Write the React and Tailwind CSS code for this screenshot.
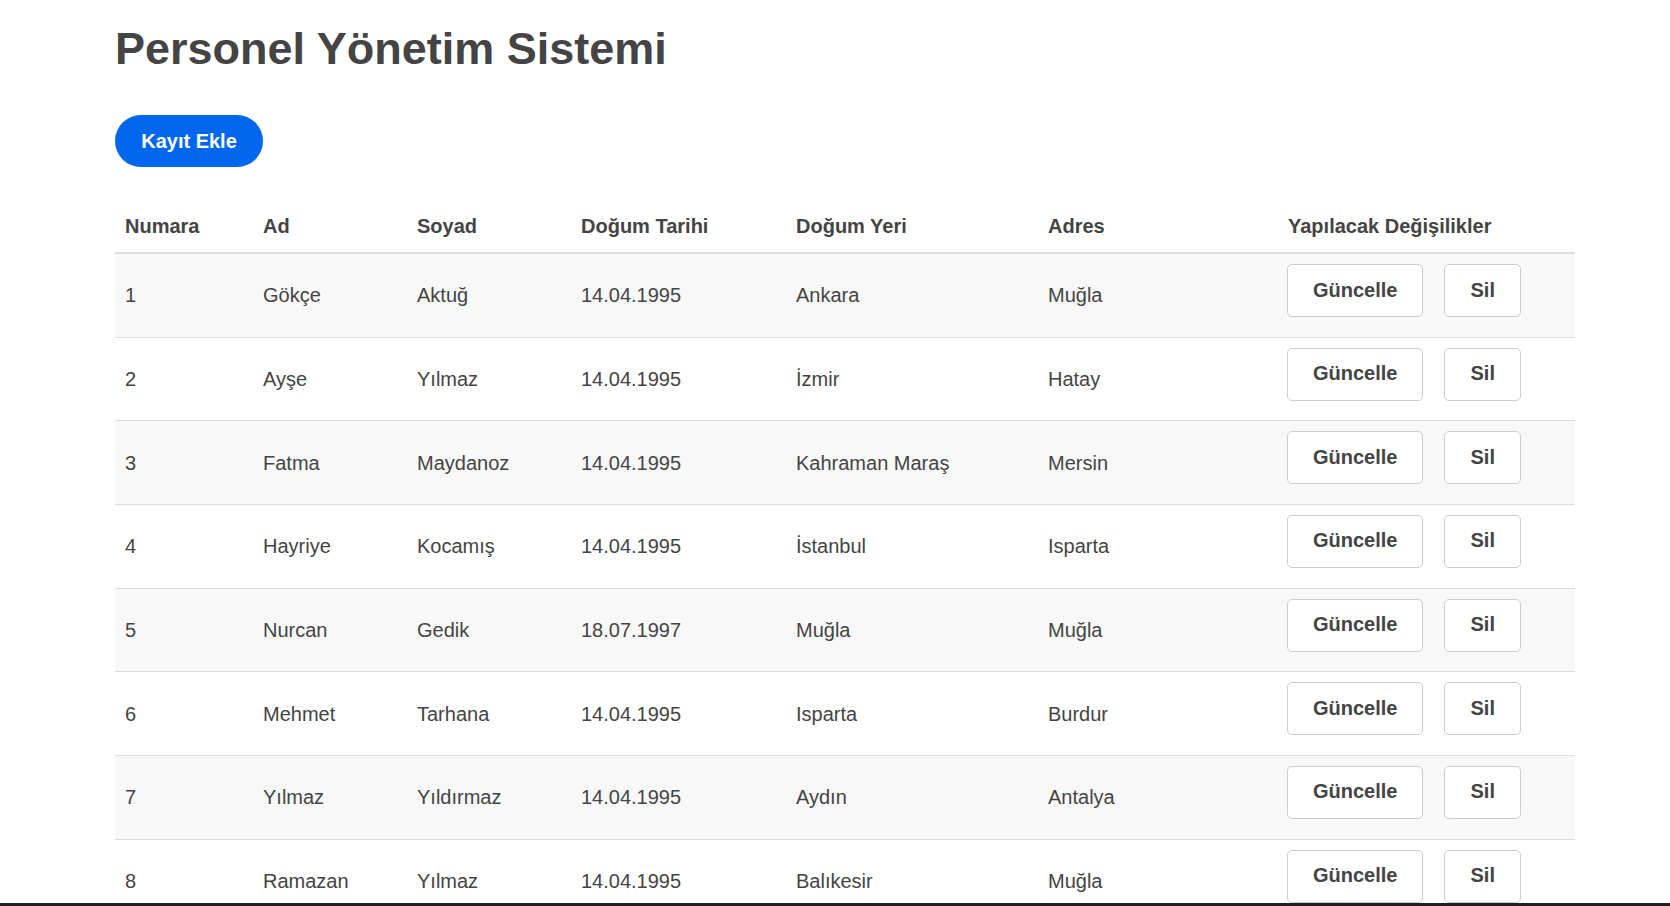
import React from 'react';

const personel = [
    {no: 1, ad: 'Gökçe', soyad: 'Aktuğ', tarih: '14.04.1995', yer: 'Ankara', adres: 'Muğla'},
    {no: 2, ad: 'Ayşe', soyad: 'Yılmaz', tarih: '14.04.1995', yer: 'İzmir', adres: 'Hatay'},
    {no: 3, ad: 'Fatma', soyad: 'Maydanoz', tarih: '14.04.1995', yer: 'Kahraman Maraş', adres: 'Mersin'},
    {no: 4, ad: 'Hayriye', soyad: 'Kocamış', tarih: '14.04.1995', yer: 'İstanbul', adres: 'Isparta'},
    {no: 5, ad: 'Nurcan', soyad: 'Gedik', tarih: '18.07.1997', yer: 'Muğla', adres: 'Muğla'},
    {no: 6, ad: 'Mehmet', soyad: 'Tarhana', tarih: '14.04.1995', yer: 'Isparta', adres: 'Burdur'},
    {no: 7, ad: 'Yılmaz', soyad: 'Yıldırmaz', tarih: '14.04.1995', yer: 'Aydın', adres: 'Antalya'},
    {no: 8, ad: 'Ramazan', soyad: 'Yılmaz', tarih: '14.04.1995', yer: 'Balıkesir', adres: 'Muğla'}
];

const basliklar = [
    {label: 'Numara', w: 'w-[138px]'},
    {label: 'Ad', w: 'w-[154px]'},
    {label: 'Soyad', w: 'w-[164px]'},
    {label: 'Doğum Tarihi', w: 'w-[215px]'},
    {label: 'Doğum Yeri', w: 'w-[252px]'},
    {label: 'Adres', w: 'w-[240px]'},
    {label: 'Yapılacak Değişilikler', w: 'w-[297px]'}
];

function IslemButonu({children}) {
    return (
        <button className="h-[53px] px-[25px] pb-[2px] bg-white border border-[#cccccc] rounded-[5px] text-[20px] font-bold text-[#444444] leading-none">
            {children}
        </button>
    );
}

export default function App() {
    return (
        <div className="min-h-screen bg-white text-[#444444] font-['Liberation_Sans',Arial,sans-serif] pl-[115px] pb-10">
            {/* Başlık */}
            <h1 className="pt-[23px] text-[45px] leading-[52px] font-bold text-[#444444]">
                Personel Yönetim Sistemi
            </h1>

            <button className="mt-[40px] w-[148px] h-[52px] rounded-full bg-[#0066ee] text-white text-[20px] font-bold leading-none">
                Kayıt Ekle
            </button>

            {/* Tablo */}
            <table className="mt-[38px] w-[1460px] table-fixed border-collapse text-left">
                <thead>
                    <tr className="border-b-2 border-[#dddddd]">
                        {basliklar.map((b) => (
                            <th key={b.label}
                                className={`${b.w} px-[10px] pt-[10px] pb-[14px] text-[20px] leading-[23px] font-bold`}>
                                {b.label}
                            </th>
                        ))}
                    </tr>
                </thead>
                <tbody>
                    {personel.map((p, i) => (
                        <tr key={p.no}
                            className={`border-b border-[#dddddd] text-[20px] ${i % 2 === 0 ? 'bg-[#f8f8f8]' : 'bg-white'}`}>
                            <td className="px-[10px] align-middle">{p.no}</td>
                            <td className="px-[10px] align-middle">{p.ad}</td>
                            <td className="px-[10px] align-middle">{p.soyad}</td>
                            <td className="px-[10px] align-middle">{p.tarih}</td>
                            <td className="px-[10px] align-middle">{p.yer}</td>
                            <td className="px-[10px] align-middle">{p.adres}</td>
                            <td className="pl-[9px] pr-[10px] pt-[10px] pb-[19.67px] align-top">
                                <div className="flex gap-[21px]">
                                    <IslemButonu>Güncelle</IslemButonu>
                                    <IslemButonu>Sil</IslemButonu>
                                </div>
                            </td>
                        </tr>
                    ))}
                </tbody>
            </table>

            {/* ekranın altındaki koyu şerit */}
            <div className="fixed left-0 right-0 bottom-0 h-[3px] bg-[#1e1e1e]" />
        </div>
    );
}
